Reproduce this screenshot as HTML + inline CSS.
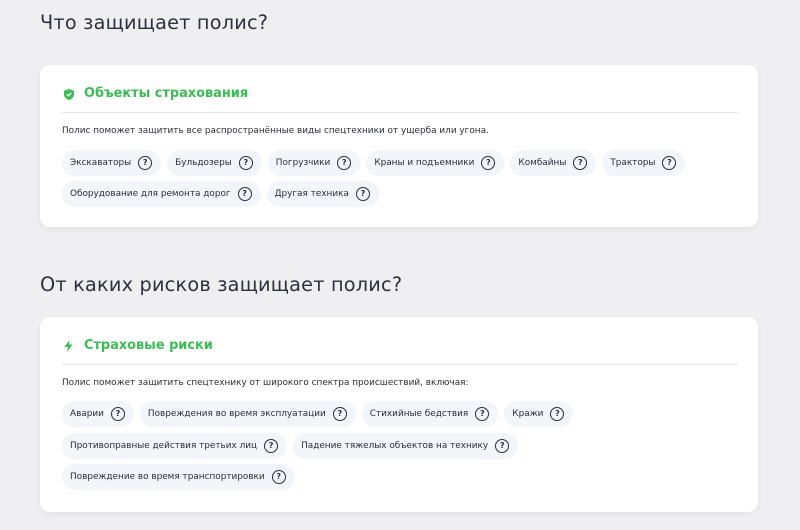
<!DOCTYPE html>
<html><head><meta charset="utf-8"><style>
*{margin:0;padding:0;box-sizing:border-box}
body{width:800px;height:530px;background:#efeff1;font-family:"DejaVu Sans","Liberation Sans",sans-serif;color:#2b2d3a;position:relative;overflow:hidden}
h2{position:absolute;left:40px;font-weight:normal;font-size:19.3px;color:#2e3040;letter-spacing:0.2px}
.card{position:absolute;left:40px;width:718px;background:#fff;border-radius:10px;box-shadow:0 2px 6px rgba(0,0,0,0.06)}
.t{position:absolute;left:44px;font-size:12.9px;font-weight:bold;color:#3dbb54}
.ic{position:absolute;left:24px}
.hr{position:absolute;left:22px;right:20px;height:1px;background:#e3e4e8}
.d{position:absolute;left:22px;font-size:8.9px;color:#2b2d3a}
.row{position:absolute;left:22px;display:flex;gap:6px}
.c{display:flex;align-items:center;height:26px;border-radius:13px;background:#f2f5fa;font-size:8.9px;padding:0 9px 0 8px;white-space:nowrap;color:#2b2d3a}
.c i{margin-left:7px;width:14px;height:14px;border:1.2px solid #2b2d3a;border-radius:50%;font-style:normal;font-size:8px;line-height:12px;text-align:center;font-weight:bold;flex:none}
</style></head><body>
<h2 style="top:11px">Что защищает полис?</h2>
<div class="card" style="top:65px;height:162px">
<svg class="ic" style="top:24px" width="10" height="11" viewBox="0 0 10 11"><path d="M5 0L10 1.8V5.5C10 8.2 7.8 10 5 11C2.2 10 0 8.2 0 5.5V1.8Z" fill="#3dbb54"/><path d="M2.8 5.3L4.4 6.8L7.3 3.9" stroke="#fff" stroke-width="1.3" fill="none"/></svg>
<div class="t" style="top:21px">Объекты страхования</div>
<div class="hr" style="top:47px"></div>
<div class="d" style="top:61px">Полис поможет защитить все распространённые виды спецтехники от ущерба или угона.</div>
<div class="row" style="top:85px">
<div class="c">Экскаваторы<i>?</i></div>
<div class="c">Бульдозеры<i>?</i></div>
<div class="c">Погрузчики<i>?</i></div>
<div class="c">Краны и подъемники<i>?</i></div>
<div class="c">Комбайны<i>?</i></div>
<div class="c">Тракторы<i>?</i></div>
</div>
<div class="row" style="top:116px">
<div class="c">Оборудование для ремонта дорог<i>?</i></div>
<div class="c">Другая техника<i>?</i></div>
</div>
</div>
<h2 style="top:273px">От каких рисков защищает полис?</h2>
<div class="card" style="top:317px;height:195px">
<svg class="ic" style="top:23px" width="9" height="12" viewBox="0 0 9 12"><path d="M5.5 0L0.5 7H4L3 12L8.5 4.5H5Z" fill="#3dbb54"/></svg>
<div class="t" style="top:21px">Страховые риски</div>
<div class="hr" style="top:47px"></div>
<div class="d" style="top:61px">Полис поможет защитить спецтехнику от широкого спектра происшествий, включая:</div>
<div class="row" style="top:84px">
<div class="c">Аварии<i>?</i></div>
<div class="c">Повреждения во время эксплуатации<i>?</i></div>
<div class="c">Стихийные бедствия<i>?</i></div>
<div class="c">Кражи<i>?</i></div>
</div>
<div class="row" style="top:116px">
<div class="c">Противоправные действия третьих лиц<i>?</i></div>
<div class="c">Падение тяжелых объектов на технику<i>?</i></div>
</div>
<div class="row" style="top:147px">
<div class="c">Повреждение во время транспортировки<i>?</i></div>
</div>
</div>
</body></html>
